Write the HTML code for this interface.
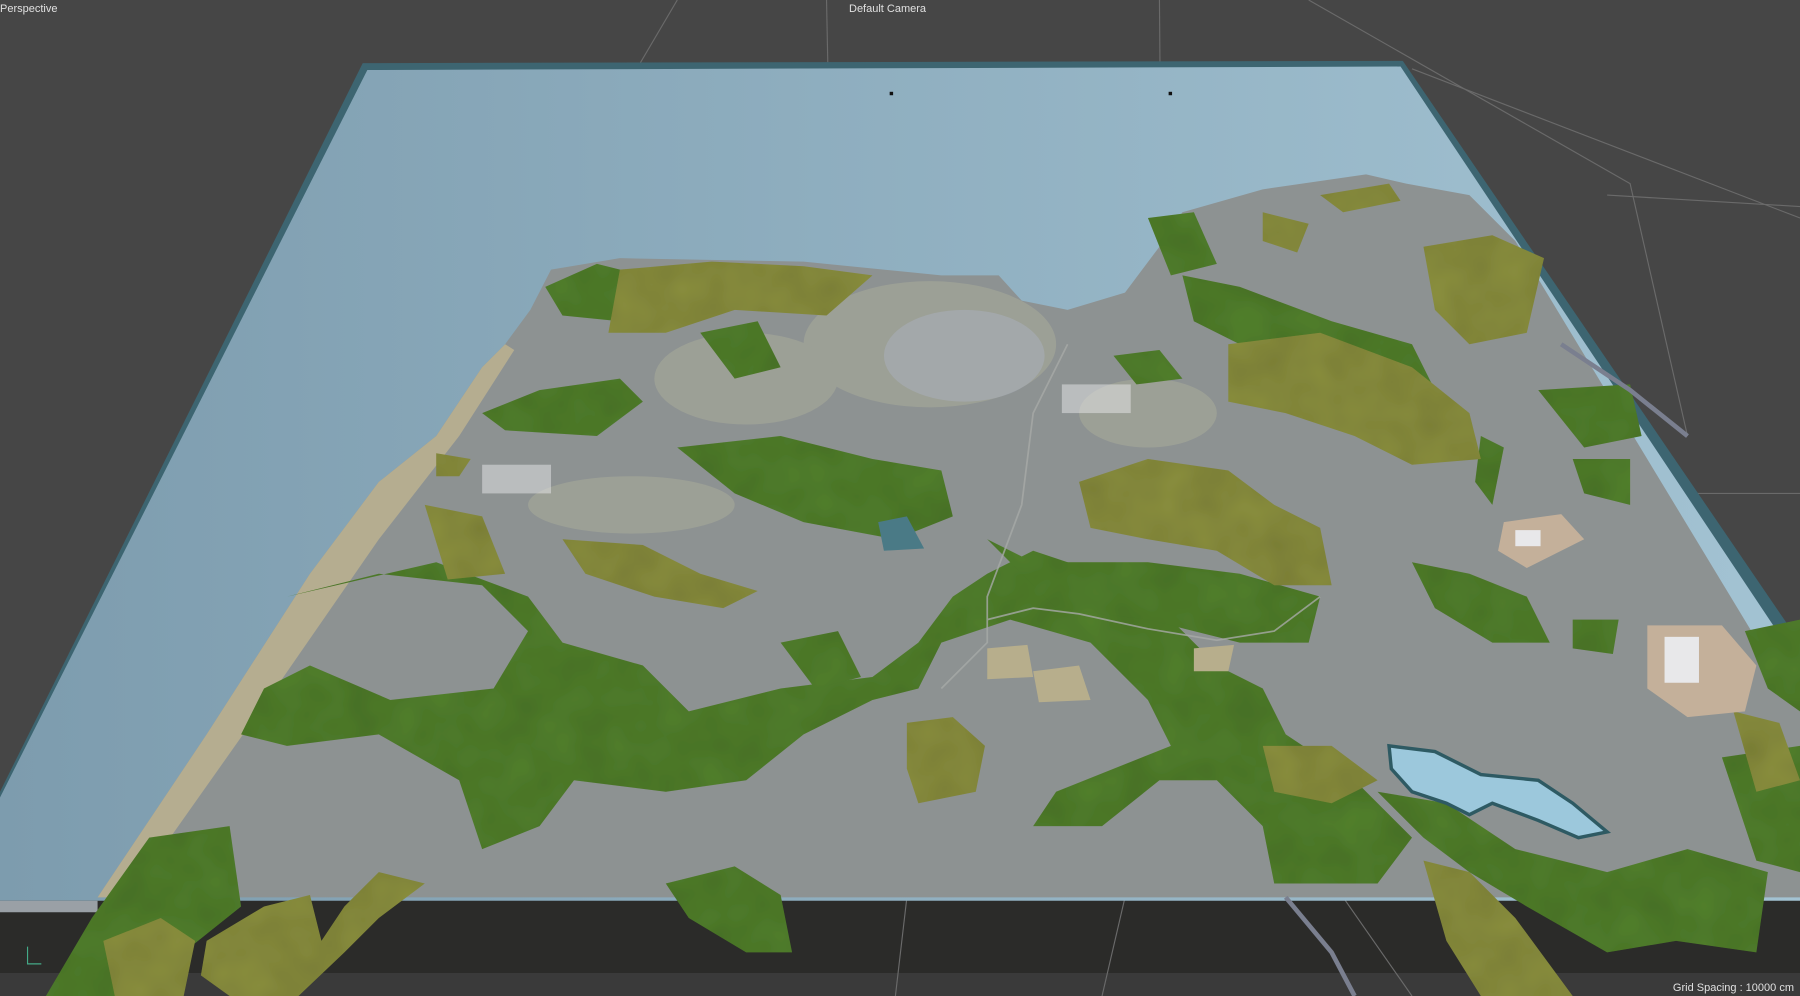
<!DOCTYPE html>
<html><head><meta charset="utf-8"><style>
html,body{margin:0;padding:0;width:1800px;height:996px;overflow:hidden;background:#464646;font-family:"Liberation Sans",sans-serif}
svg{position:absolute;left:0;top:0}
.t{position:absolute;color:#e0e0e0;font-size:11px}
</style></head><body>
<svg width="1800" height="996" viewBox="0 0 1568 868" preserveAspectRatio="none">
<defs>
<linearGradient id="w" x1="0" x2="1" y1="0" y2="0"><stop offset="0" stop-color="#7d9cae"/><stop offset="1" stop-color="#a3c3d3"/></linearGradient>
<filter id="n"><feTurbulence type="fractalNoise" baseFrequency="0.03" numOctaves="2" result="t"/><feColorMatrix in="t" type="matrix" values="0 0 0 0 0  0 0 0 0 0  0 0 0 0 0  0 0 0 0.3 0" result="a"/><feComposite in="a" in2="SourceGraphic" operator="in" result="b"/><feMerge><feMergeNode in="SourceGraphic"/><feMergeNode in="b"/></feMerge></filter>
</defs>
<rect width="1568" height="868" fill="#464646"/>
<rect y="780" width="1568" height="68" fill="#2b2b29"/>
<rect y="848" width="1568" height="20" fill="#3a3a3a"/>
<g stroke="#6a6a6a" stroke-width="1" fill="none">
<path d="M590 0 L390 340"/><path d="M1140 0 L1420 160 L1470 380"/><path d="M1230 60 L1568 190"/><path d="M1400 170 L1568 180"/><path d="M1440 430 L1568 430"/>
<path d="M720 0 L725 250"/><path d="M1010 0 L1012 240"/>
<path d="M790 782 L780 868"/><path d="M980 782 L960 868"/><path d="M1170 782 L1230 868"/>
</g>
<polygon points="316,55 1222,53 1568,560 1568,700 0,700 0,690" fill="#3d6571"/>
<polygon points="320,61 1220,58 1568,580 1568,785 0,785 0,695" fill="url(#w)"/>
<polygon points="0,785 85,785 85,795 0,795" fill="#9aa0a6"/>
<polygon points="462,270 480,235 540,225 700,228 820,240 870,240 890,262 930,270 980,255 1010,215 1030,185 1100,165 1190,152 1225,160 1280,170 1320,210 1568,620 1568,782 85,782 180,640 270,500 330,420 380,380 420,320 440,300" fill="#8d9292"/>
<polygon points="85,782 180,640 270,500 330,420 380,380 420,320 440,300 448,305 400,380 330,470 240,600 120,770 98,782" fill="#b5ad90"/>
<g fill="#a3a698" opacity="0.7">
<ellipse cx="810" cy="300" rx="110" ry="55"/><ellipse cx="650" cy="330" rx="80" ry="40"/><ellipse cx="1000" cy="360" rx="60" ry="30"/><ellipse cx="550" cy="440" rx="90" ry="25"/>
</g>
<g fill="#a8aeb8" opacity="0.6"><ellipse cx="840" cy="310" rx="70" ry="40"/></g>
<g fill="#52812f" filter="url(#n)">
<path d="M475 250 L520 230 L560 240 L540 280 L490 275Z"/>
<path d="M420 360 L470 340 L540 330 L560 350 L520 380 L440 375Z"/>
<path d="M590 390 L680 380 L760 400 L820 410 L830 450 L780 470 L700 455 L640 430Z"/>
<path d="M610 290 L660 280 L680 320 L640 330Z"/>
<path d="M250 520 L330 500 L420 510 L460 550 L430 600 L340 610 L270 580 L230 600 L210 640 L250 650 L330 640 L400 680 L420 740 L470 720 L500 680 L580 690 L650 680 L700 640 L760 610 L800 600 L820 560 L880 540 L950 560 L1000 610 L1020 650 L920 690 L900 720 L960 720 L1010 680 L1060 680 L1100 720 L1110 770 L1200 770 L1230 730 L1180 680 L1120 640 L1100 600 L1060 580 L1000 520 L960 500 L900 480 L860 500 L830 520 L800 560 L760 590 L680 600 L600 620 L560 580 L490 560 L460 520 L380 490 Z"/>
<path d="M860 470 L900 490 L1000 490 L1080 500 L1150 520 L1140 560 L1080 560 L1000 540 L920 530Z"/>
<path d="M680 560 L730 550 L750 590 L710 600Z"/>
<path d="M1030 240 L1080 250 L1160 280 L1230 300 L1250 340 L1200 350 L1150 320 L1080 300 L1040 280Z"/>
<path d="M1340 340 L1420 335 L1430 380 L1380 390Z"/>
<path d="M1370 400 L1420 400 L1420 440 L1380 430Z"/>
<path d="M1290 380 L1310 390 L1300 440 L1285 420Z"/>
<path d="M1370 540 L1410 540 L1405 570 L1370 565Z"/>
<path d="M1520 550 L1568 540 L1568 620 L1540 600Z"/>
<path d="M1200 690 L1260 700 L1320 740 L1400 760 L1470 740 L1540 760 L1530 830 L1460 820 L1400 830 L1330 790 L1280 760 L1240 730Z"/>
<path d="M580 770 L640 755 L680 780 L690 830 L650 830 L600 800Z"/>
<path d="M1230 490 L1280 500 L1330 520 L1350 560 L1300 560 L1250 530Z"/>
<path d="M40 868 L80 800 L130 730 L200 720 L210 790 L160 830 L120 868Z"/>
<path d="M1500 660 L1568 650 L1568 760 L1530 750Z"/>
<path d="M970 310 L1010 305 L1030 330 L990 335Z"/>
<path d="M1000 190 L1040 185 L1060 230 L1020 240Z"/>
</g>
<g fill="#8c9140" filter="url(#n)">
<path d="M540 235 L620 228 L700 232 L760 240 L720 275 L640 270 L580 290 L530 290Z"/>
<path d="M1240 215 L1300 205 L1345 225 L1330 290 L1280 300 L1250 270Z"/>
<path d="M1070 300 L1150 290 L1230 320 L1280 360 L1290 400 L1230 405 L1180 380 L1120 360 L1070 350Z"/>
<path d="M940 420 L1000 400 L1070 410 L1110 440 L1150 460 L1160 510 L1110 510 L1060 480 L1000 470 L950 460Z"/>
<path d="M490 470 L560 475 L610 500 L660 515 L630 530 L570 520 L510 500Z"/>
<path d="M370 440 L420 450 L440 500 L390 505Z"/>
<path d="M790 630 L830 625 L858 650 L850 690 L800 700 L790 670Z"/>
<path d="M1240 750 L1280 760 L1320 800 L1370 868 L1290 868 L1260 820Z"/>
<path d="M90 820 L140 800 L170 820 L160 868 L100 868Z"/>
<path d="M180 820 L230 790 L270 780 L280 820 L300 790 L330 760 L370 770 L330 800 L300 830 L260 868 L200 868 L175 850Z"/>
<path d="M1100 650 L1160 650 L1200 680 L1160 700 L1110 690Z"/>
<path d="M1510 620 L1550 630 L1568 680 L1530 690Z"/>
<path d="M380 395 L410 400 L400 415 L380 415Z"/>
<path d="M1150 170 L1210 160 L1220 175 L1170 185Z"/>
<path d="M1100 185 L1140 195 L1130 220 L1100 210Z"/>
</g>
<g fill="#b7ae8c"><path d="M860 565 L895 562 L900 590 L860 592Z"/><path d="M900 585 L940 580 L950 610 L905 612Z"/><path d="M1040 565 L1075 562 L1070 585 L1040 585Z"/></g>
<g fill="#c4b09a"><path d="M1310 455 L1360 448 L1380 470 L1330 495 L1305 480Z"/><path d="M1435 545 L1500 545 L1530 580 L1520 620 L1470 625 L1435 600Z"/></g>
<g fill="#e8e8ea"><rect x="1320" y="462" width="22" height="14"/><rect x="1450" y="555" width="30" height="40"/><rect x="420" y="405" width="60" height="25" opacity=".5"/><rect x="925" y="335" width="60" height="25" opacity=".5"/></g>
<path d="M1210 650 L1250 655 L1290 675 L1340 680 L1370 700 L1400 725 L1375 730 L1340 715 L1300 700 L1280 710 L1260 700 L1230 690 L1212 670Z" fill="#9cc8dc" stroke="#2e5a63" stroke-width="3"/>
<path d="M765 455 L790 450 L805 478 L770 480Z" fill="#4a7a86"/>
<g stroke="#a7aaa8" stroke-width="1.5" fill="none" opacity="0.8">
<path d="M860 540 L900 530 L940 535 L1000 548 L1060 558 L1110 550 L1150 520"/>
<path d="M930 300 L900 360 L890 440 L860 520 L860 560 L820 600"/>
</g>
<path d="M1360 300 L1420 340 L1470 380" stroke="#7a7f8f" stroke-width="4" fill="none"/>
<path d="M1120 782 L1160 830 L1180 868" stroke="#7a7f8f" stroke-width="4" fill="none"/>
<rect x="775" y="80" width="3" height="3" fill="#111"/><rect x="1018" y="80" width="3" height="3" fill="#111"/>
<path d="M24 825 L24 840 L36 840" stroke="#4a8" stroke-width="1" fill="none"/>
</svg>
<div class="t" style="left:0;top:3px">Perspective</div>
<div class="t" style="left:849px;top:3px">Default Camera</div>
<div class="t" style="right:6px;bottom:2px">Grid Spacing : 10000 cm</div>
</body></html>
